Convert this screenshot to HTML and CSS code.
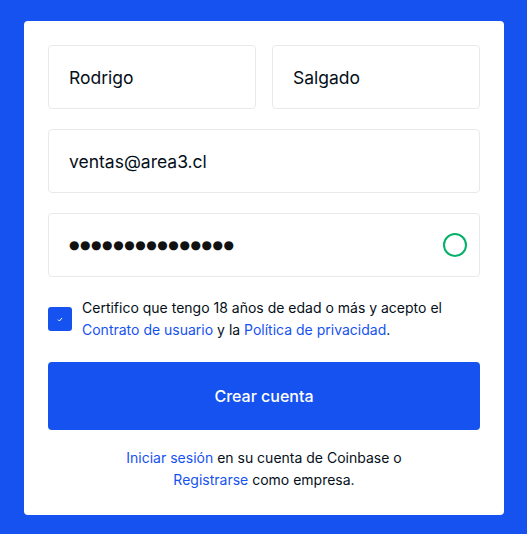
FILE: index.html
```html
<!DOCTYPE html>
<html lang="es">
<head>
	<meta charset="UTF-8">
	<title>Crear cuenta</title>
	<link rel="stylesheet" href="styles.css">
</head>
<body>
	<div class="card">
		<div class="row">
			<div class="field">Rodrigo</div>
			<div class="field">Salgado</div>
		</div>
		<div class="field">ventas@area3.cl</div>
		<div class="field pass">
			<span class="dots">●●●●●●●●●●●●●●●</span>
			<span class="ok"></span>
		</div>
		<div class="terms">
			<span class="check">
				<svg width="6" height="5" viewBox="0 0 6 5"><path d="M1 2.6 L2.4 4 L5 1" fill="none" stroke="#fff" stroke-width="1"/></svg>
			</span>
			<p>Certifico que tengo 18 años de edad o más y acepto el <a href="#">Contrato de usuario</a> y la <a href="#">Política de privacidad</a>.</p>
		</div>
		<a href="#" class="btn">Crear cuenta</a>
		<p class="foot"><a href="#">Iniciar sesión</a> en su cuenta de Coinbase o<br><a href="#">Registrarse</a> como empresa.</p>
	</div>
</body>
</html>
```
FILE: styles.css
```css
*{
	margin:0;
	padding:0;
	box-sizing:border-box;
	text-decoration:none;
}
body{
	background:#1652f0;
	font-family:Inter, "Noto Sans", sans-serif;
	color:#050f19;
	padding:21px 23px 19px 24px;
}
.card{
	background:#fff;
	border-radius:4px;
	padding:24px 24px 24px;
	display:flex;
	flex-direction:column;
	gap:20px;
}
.row{
	display:flex;
	gap:16px;
}
.row .field{
	flex:1;
}
.field{
	height:64px;
	border:1px solid #e7eaed;
	border-radius:4px;
	padding:0 20px;
	display:flex;
	align-items:center;
	font-size:17.5px;
}
.pass{
	justify-content:space-between;
	padding-right:12px;
}
.dots{
	font-family:"DejaVu Sans", sans-serif;
	font-size:12px;
	letter-spacing:0.57px;
	color:#111;
}
.ok{
	width:24px;
	height:24px;
	border:2px solid #05b169;
	border-radius:50%;
}
.terms{
	display:flex;
	align-items:center;
	gap:10px;
}
.check{
	flex:none;
	width:24px;
	height:24px;
	background:#1652f0;
	border-radius:3px;
	display:flex;
	align-items:center;
	justify-content:center;
}
.terms p{
	font-size:14px;
	line-height:22px;
}
a{
	color:#1652f0;
}
.btn{
	display:block;
	height:68px;
	line-height:68px;
	text-align:center;
	background:#1652f0;
	color:#fff;
	border-radius:4px;
	font-size:16px;
	font-weight:500;
	margin-top:1px;
}
.foot{
	text-align:center;
	font-size:14px;
	line-height:22px;
	margin-top:-3px;
}
```
